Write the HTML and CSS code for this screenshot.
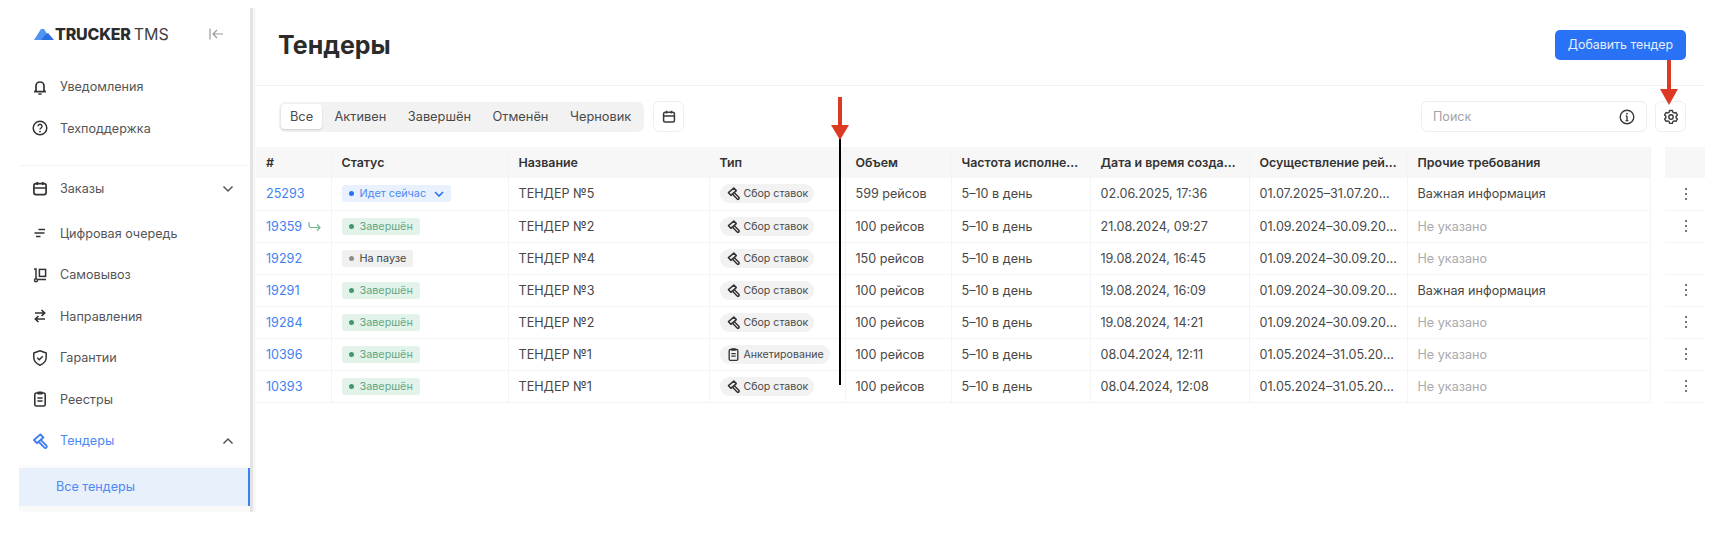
FILE: index.html
```html
<!DOCTYPE html>
<html lang="ru">
<head>
    <meta charset="UTF-8">
    <title>Тендеры</title>
    <link rel="stylesheet" href="styles.css">
</head>
<body>
    <svg class="icon-defs" width="0" height="0">
        <defs>
            <symbol id="i-gavel" viewBox="0 0 18 18">
                <path d="M9.4 2.4L3 8l2.9 3.2 6.4-5.7z" fill="none" stroke="currentColor" stroke-width="1.9" stroke-linejoin="round"/>
                <path d="M10 8.2l5.4 5.4a1.4 1.4 0 0 1-2 2L7.9 10" fill="none" stroke="currentColor" stroke-width="1.8" stroke-linejoin="round"/>
            </symbol>
            <symbol id="i-clip" viewBox="0 0 18 18">
                <rect x="3.8" y="3" width="10.4" height="13" rx="1.6" fill="none" stroke="currentColor" stroke-width="1.6"/>
                <rect x="6.2" y="1.6" width="5.6" height="3" rx="1" fill="currentColor"/>
                <path d="M6.4 8h5.2M6.4 11h5.2" stroke="currentColor" stroke-width="1.4"/>
            </symbol>
            <symbol id="i-cal" viewBox="0 0 18 18">
                <rect x="2.9" y="3.6" width="12.2" height="11" rx="2" fill="none" stroke="currentColor" stroke-width="1.7"/>
                <path d="M2.9 8h12.2M6.2 2v3M11.8 2v3" stroke="currentColor" stroke-width="1.7"/>
            </symbol>
            <symbol id="i-dots" viewBox="0 0 4 14">
                <circle cx="2" cy="2" r="1" fill="currentColor"/>
                <circle cx="2" cy="7" r="1" fill="currentColor"/>
                <circle cx="2" cy="12" r="1" fill="currentColor"/>
            </symbol>
        </defs>
    </svg>

    <div class="app">
        <aside class="sidebar">
            <div class="logo-row">
                <div class="logo">
                    <svg class="logo-mark" width="20" height="11" viewBox="0 0 20 11">
                        <path d="M0 11L7 0h3l3.5 5.5L9 11z" fill="#4f94f5"/>
                        <path d="M7 11l5-6 2-1 6 7z" fill="#2a6fe0"/>
                    </svg>
                    <span class="logo-bold">TRUCKER</span><span class="logo-light">TMS</span>
                </div>
                <svg class="collapse" width="16" height="14" viewBox="0 0 16 14">
                    <path d="M2 1.5v11M15 7H5M9 3L5 7l4 4" fill="none" stroke="#9a9a9a" stroke-width="1.2"/>
                </svg>
            </div>

            <a class="nav-item">
                <svg class="nav-icon" viewBox="0 0 18 18"><path d="M5 12.4V8a4 4 0 0 1 8 0v4.4l1.2 1.3H3.8zM7.4 16h3.2" fill="none" stroke="currentColor" stroke-width="1.7" stroke-linejoin="round"/></svg>
                Уведомления
            </a>
            <a class="nav-item">
                <svg class="nav-icon" viewBox="0 0 18 18"><circle cx="9" cy="9" r="6.8" fill="none" stroke="currentColor" stroke-width="1.5"/><path d="M7 7.2a2 2 0 1 1 3 1.8c-.7.4-1 .8-1 1.5" fill="none" stroke="currentColor" stroke-width="1.4"/><circle cx="9" cy="12.6" r=".9" fill="currentColor"/></svg>
                Техподдержка
            </a>

            <nav class="nav-panel">
                <a class="nav-item nav-orders">
                    <svg class="nav-icon"><use href="#i-cal"/></svg>
                    Заказы
                    <svg class="chevron" width="12" height="8" viewBox="0 0 12 8"><path d="M1.5 1.5L6 6l4.5-4.5" fill="none" stroke="currentColor" stroke-width="1.5"/></svg>
                </a>
                <a class="nav-item">
                    <svg class="nav-icon" viewBox="0 0 18 18"><path d="M7.5 5.5h6.5M3.5 9h10M5 12.5h4.5" fill="none" stroke="currentColor" stroke-width="1.6"/></svg>
                    Цифровая очередь
                </a>
                <a class="nav-item">
                    <svg class="nav-icon" viewBox="0 0 18 18"><path d="M3 3h2v10M7 13.5h8" fill="none" stroke="currentColor" stroke-width="1.5"/><circle cx="5" cy="14.3" r="1.5" fill="none" stroke="currentColor" stroke-width="1.4"/><rect x="8.4" y="3.4" width="6.2" height="7" fill="none" stroke="currentColor" stroke-width="1.5"/></svg>
                    Самовывоз
                </a>
                <a class="nav-item">
                    <svg class="nav-icon" viewBox="0 0 18 18"><path d="M4 6h9.5M10.6 3L13.6 6l-3 3M14 12H4.5M7.4 9l-3 3 3 3" fill="none" stroke="currentColor" stroke-width="1.7"/></svg>
                    Направления
                </a>
                <a class="nav-item">
                    <svg class="nav-icon" viewBox="0 0 18 18"><path d="M9 1.8l6.2 2.2v4.6c0 3.7-2.6 6.2-6.2 7.6-3.6-1.4-6.2-3.9-6.2-7.6V4z" fill="none" stroke="currentColor" stroke-width="1.5" stroke-linejoin="round"/><path d="M6.2 8.8l2 2 3.6-3.6" fill="none" stroke="currentColor" stroke-width="1.5"/></svg>
                    Гарантии
                </a>
                <a class="nav-item">
                    <svg class="nav-icon"><use href="#i-clip"/></svg>
                    Реестры
                </a>
                <a class="nav-item nav-active">
                    <svg class="nav-icon"><use href="#i-gavel"/></svg>
                    Тендеры
                    <svg class="chevron chevron-up" width="12" height="8" viewBox="0 0 12 8"><path d="M1.5 6.5L6 2l4.5 4.5" fill="none" stroke="currentColor" stroke-width="1.5"/></svg>
                </a>
                <a class="sub-item">Все тендеры</a>
            </nav>
        </aside>

        <main class="content">
            <header class="page-head">
                <h1>Тендеры</h1>
                <button class="btn-primary">Добавить тендер</button>
            </header>

            <div class="toolbar">
                <div class="tabs">
                    <span class="tab tab-active">Все</span>
                    <span class="tab">Активен</span>
                    <span class="tab">Завершён</span>
                    <span class="tab">Отменён</span>
                    <span class="tab">Черновик</span>
                </div>
                <button class="btn-icon btn-cal"><svg width="16" height="16"><use href="#i-cal"/></svg></button>
                <div class="search">
                    <span>Поиск</span>
                    <svg width="16" height="16" viewBox="0 0 16 16"><circle cx="8" cy="8" r="6.8" fill="none" stroke="currentColor" stroke-width="1.4"/><path d="M8 7v4.4M6.6 11.6h2.8M6.8 7h1.2" fill="none" stroke="currentColor" stroke-width="1.4"/><circle cx="8" cy="4.7" r=".9" fill="currentColor"/></svg>
                </div>
                <button class="btn-icon">
                    <svg width="16" height="16" viewBox="0 0 16 16"><path d="M6.6 1.5h2.8l.5 1.8 1.3.7 1.8-.5 1.4 2.4-1.3 1.3v1.5l1.3 1.3-1.4 2.4-1.8-.5-1.3.7-.5 1.8H6.6l-.5-1.8-1.3-.7-1.8.5-1.4-2.4 1.3-1.3V7.2L1.6 5.9 3 3.5l1.8.5 1.3-.7z" fill="none" stroke="currentColor" stroke-width="1.4" stroke-linejoin="round"/><circle cx="8" cy="8" r="2.2" fill="none" stroke="currentColor" stroke-width="1.4"/></svg>
                </button>
            </div>

            <table class="tenders">
                <colgroup>
                    <col class="c-id"><col class="c-status"><col class="c-name"><col class="c-type"><col class="c-vol"><col class="c-freq"><col class="c-date"><col class="c-run"><col class="c-other"><col class="c-gap"><col class="c-act">
                </colgroup>
                <thead>
                    <tr><th>#</th><th>Статус</th><th>Название</th><th>Тип</th><th>Объем</th><th>Частота исполнения</th><th>Дата и время создания</th><th>Осуществление рейсов</th><th>Прочие требования</th><th class="gap"></th><th></th></tr>
                </thead>
                <tbody>
                    <tr>
                        <td><a class="num">25293</a></td>
                        <td><span class="badge b-blue"><i></i>Идет сейчас<svg width="10" height="6" viewBox="0 0 10 6"><path d="M1 1l4 4 4-4" fill="none" stroke="currentColor" stroke-width="1.6"/></svg></span></td>
                        <td>ТЕНДЕР №5</td>
                        <td><span class="chip"><svg width="15" height="15"><use href="#i-gavel"/></svg>Сбор ставок</span></td>
                        <td>599 рейсов</td><td>5–10 в день</td><td>02.06.2025, 17:36</td><td class="run-narrow">01.07.2025–31.07.2025</td><td>Важная информация</td><td class="gap"></td>
                        <td class="act"><svg width="4" height="14"><use href="#i-dots"/></svg></td>
                    </tr>
                    <tr>
                        <td><a class="num">19359</a><svg class="repeat" width="13" height="10" viewBox="0 0 13 10"><path d="M1 1v3.5a2 2 0 0 0 2 2h9M9 3.5l3 3-3 3" fill="none" stroke="currentColor" stroke-width="1.2"/></svg></td>
                        <td><span class="badge b-green"><i></i>Завершён</span></td>
                        <td>ТЕНДЕР №2</td>
                        <td><span class="chip"><svg width="15" height="15"><use href="#i-gavel"/></svg>Сбор ставок</span></td>
                        <td>100 рейсов</td><td>5–10 в день</td><td>21.08.2024, 09:27</td><td>01.09.2024–30.09.2024</td><td class="muted">Не указано</td><td class="gap"></td>
                        <td class="act"><svg width="4" height="14"><use href="#i-dots"/></svg></td>
                    </tr>
                    <tr>
                        <td><a class="num">19292</a></td>
                        <td><span class="badge b-grey"><i></i>На паузе</span></td>
                        <td>ТЕНДЕР №4</td>
                        <td><span class="chip"><svg width="15" height="15"><use href="#i-gavel"/></svg>Сбор ставок</span></td>
                        <td>150 рейсов</td><td>5–10 в день</td><td>19.08.2024, 16:45</td><td>01.09.2024–30.09.2024</td><td class="muted">Не указано</td><td class="gap"></td>
                        <td class="act"></td>
                    </tr>
                    <tr>
                        <td><a class="num">19291</a></td>
                        <td><span class="badge b-green"><i></i>Завершён</span></td>
                        <td>ТЕНДЕР №3</td>
                        <td><span class="chip"><svg width="15" height="15"><use href="#i-gavel"/></svg>Сбор ставок</span></td>
                        <td>100 рейсов</td><td>5–10 в день</td><td>19.08.2024, 16:09</td><td>01.09.2024–30.09.2024</td><td>Важная информация</td><td class="gap"></td>
                        <td class="act"><svg width="4" height="14"><use href="#i-dots"/></svg></td>
                    </tr>
                    <tr>
                        <td><a class="num">19284</a></td>
                        <td><span class="badge b-green"><i></i>Завершён</span></td>
                        <td>ТЕНДЕР №2</td>
                        <td><span class="chip"><svg width="15" height="15"><use href="#i-gavel"/></svg>Сбор ставок</span></td>
                        <td>100 рейсов</td><td>5–10 в день</td><td>19.08.2024, 14:21</td><td>01.09.2024–30.09.2024</td><td class="muted">Не указано</td><td class="gap"></td>
                        <td class="act"><svg width="4" height="14"><use href="#i-dots"/></svg></td>
                    </tr>
                    <tr>
                        <td><a class="num">10396</a></td>
                        <td><span class="badge b-green"><i></i>Завершён</span></td>
                        <td>ТЕНДЕР №1</td>
                        <td><span class="chip"><svg width="15" height="15"><use href="#i-clip"/></svg>Анкетирование</span></td>
                        <td>100 рейсов</td><td>5–10 в день</td><td>08.04.2024, 12:11</td><td>01.05.2024–31.05.2024</td><td class="muted">Не указано</td><td class="gap"></td>
                        <td class="act"><svg width="4" height="14"><use href="#i-dots"/></svg></td>
                    </tr>
                    <tr>
                        <td><a class="num">10393</a></td>
                        <td><span class="badge b-green"><i></i>Завершён</span></td>
                        <td>ТЕНДЕР №1</td>
                        <td><span class="chip"><svg width="15" height="15"><use href="#i-gavel"/></svg>Сбор ставок</span></td>
                        <td>100 рейсов</td><td>5–10 в день</td><td>08.04.2024, 12:08</td><td>01.05.2024–31.05.2024</td><td class="muted">Не указано</td><td class="gap"></td>
                        <td class="act"><svg width="4" height="14"><use href="#i-dots"/></svg></td>
                    </tr>
                </tbody>
            </table>
        </main>
    </div>

    <!-- пометки поверх скриншота -->
    <div class="mark-line"></div>
    <svg class="arrow arrow-col" width="18" height="44" viewBox="0 0 18 44"><path d="M7 0h4v28h7l-9 15-9-15h7z" fill="#dd3a24"/></svg>
    <svg class="arrow arrow-gear" width="18" height="45" viewBox="0 0 18 45"><path d="M7 0h4v29h7l-9 16-9-16h7z" fill="#dd3a24"/></svg>
</body>
</html>
```

FILE: styles.css
```css
* {
    box-sizing: border-box;
}
html, body {
    margin: 0;
    height: 100%;
}
body {
    position: relative;
    overflow: hidden;
    background: #fff;
    color: #474747;
    font-family: Inter, "Noto Sans", sans-serif;
    font-size: 12.6px;
}
.icon-defs {
    position: absolute;
}
.app {
    display: flex;
    height: 512px;
    padding-top: 8px;
}

/* sidebar */
.sidebar {
    width: 256px;
    flex: none;
    padding-right: 6px;
    background: linear-gradient(to right, #e2e2e2 0, #e6e6e6 3px, #f3f3f3 3px, #fbfbfb 6px) right top / 6px 100% no-repeat;
}
.logo-row {
    display: flex;
    align-items: center;
    justify-content: space-between;
    height: 52px;
    margin-bottom: 6px;
    padding: 0 26px 0 34px;
}
.logo {
    display: flex;
    align-items: center;
    font-size: 16px;
    color: #2b2b2b;
}
.logo-mark {
    margin-right: 1px;
}
.logo-bold {
    font-weight: 800;
    letter-spacing: -0.2px;
    margin-right: 3px;
}
.logo-light {
    font-weight: 400;
    color: #3f3f3f;
}
.nav-item {
    display: flex;
    align-items: center;
    gap: 11px;
    height: 41.5px;
    padding-left: 31px;
    color: #555;
}
.nav-icon {
    width: 18px;
    height: 18px;
    flex: none;
    color: #333;
}
.nav-panel {
    margin: 16px 0 0 19px;
    padding-top: 2px;
    border-top: 1px solid #f4f4f4;
}
.nav-panel .nav-item {
    padding-left: 12px;
}
.nav-orders {
    margin-bottom: 3px;
}
.chevron {
    margin-left: auto;
    margin-right: 16px;
    color: #555;
}
.nav-active {
    color: #4d88f5;
}
.nav-active .nav-icon {
    color: #3f7ff2;
}
.nav-active .chevron {
    color: #555;
}
.sub-item {
    display: flex;
    align-items: center;
    height: 38px;
    margin-top: 6px;
    padding-left: 37px;
    background: #e8f0fc;
    border-right: 2px solid #3f7ff2;
    box-shadow: 0 -3px 0 #fbfbfb, 0 6px 0 #fafafa;
    color: #4d88f5;
}

/* main */
.content {
    flex: 1;
    min-width: 0;
    padding-right: 23px;
}
.page-head {
    display: flex;
    align-items: center;
    justify-content: space-between;
    height: 78px;
    padding: 0 19px 4px 22px;
    border-bottom: 1px solid #f3f3f3;
}
h1 {
    margin: 0;
    font-size: 25px;
    font-weight: 700;
    color: #2b2b2b;
}
.btn-primary {
    width: 131px;
    height: 30px;
    border: none;
    border-radius: 5px;
    background: #2a72f5;
    color: #e6eefc;
    font: 12.4px Inter, sans-serif;
}
.toolbar {
    display: flex;
    align-items: center;
    height: 61px;
    padding: 0 19px 0 23px;
}
.tabs {
    display: flex;
    align-items: center;
    height: 30px;
    padding: 0 2px;
    border-radius: 6px;
    background: #f2f2f2;
}
.tab {
    padding: 0 10.8px;
    line-height: 25px;
    border-radius: 4px;
    font-size: 12.8px;
    color: #4a4a4a;
}
.tab-active {
    padding: 0 9px;
    margin-right: 1.5px;
    background: #fff;
    box-shadow: 0 1px 2px rgba(0, 0, 0, 0.15);
}
.btn-icon {
    display: flex;
    align-items: center;
    justify-content: center;
    width: 31px;
    height: 31px;
    padding: 0;
    border: 1px solid #eee;
    border-radius: 6px;
    background: #fff;
    color: #3a3a3a;
}
.btn-cal {
    margin-left: 9px;
    margin-right: auto;
}
.search {
    display: flex;
    align-items: center;
    justify-content: space-between;
    width: 226px;
    height: 31px;
    margin-right: 8px;
    padding: 0 11px;
    border: 1px solid #eee;
    border-radius: 6px;
    color: #a3a3a3;
}
.search svg {
    color: #3a3a3a;
}

/* table */
.tenders {
    width: 1449px;
    table-layout: fixed;
    border-collapse: collapse;
}
.c-id { width: 75px; }
.c-status { width: 177px; }
.c-name { width: 201px; }
.c-type { width: 136px; }
.c-vol { width: 106px; }
.c-freq { width: 139px; }
.c-date { width: 159px; }
.c-run { width: 158px; }
.c-other { width: 243px; }
.c-gap { width: 15px; }
.c-act { width: 40px; }
th, td {
    height: 32px;
    padding: 0 9px 0 10px;
    overflow: hidden;
    white-space: nowrap;
    text-overflow: ellipsis;
    text-align: left;
    border-right: 1px solid #f4f4f4;
    border-bottom: 1px solid #f4f4f4;
}
td:first-child, td:nth-child(4) {
    padding-right: 0;
}
td.run-narrow {
    padding-right: 14px;
}
th {
    height: 31px;
    background: #f7f7f7;
    border-bottom: none;
    font-size: 12.4px;
    font-weight: 600;
    color: #333;
}
.tenders .gap {
    padding: 0;
    background: #fff;
    border: none;
}
th:last-child, td:last-child {
    border-right: none;
}
td.act {
    padding: 0 0 0 2px;
    text-align: center;
    color: #4a4a4a;
}
td.act svg {
    display: block;
    margin: 0 auto;
}
.num {
    color: #3f7ff2;
}
.repeat {
    margin-left: 6px;
    color: #6fb98f;
}
.muted {
    color: #aaa;
}
.badge {
    display: inline-flex;
    align-items: center;
    gap: 6px;
    height: 17px;
    padding: 0 7px;
    border-radius: 3px;
    font-size: 10.8px;
    vertical-align: middle;
}
.badge i {
    width: 5px;
    height: 5px;
    border-radius: 50%;
    background: currentColor;
}
.b-blue {
    background: #e8f1fd;
    color: #4d88f5;
}
.b-blue i, .b-blue svg {
    color: #2a72f5;
}
.b-blue svg {
    margin-left: 2px;
}
.b-green {
    background: #e4f3ea;
    color: #63a884;
}
.b-green i {
    background: #3f9a68;
}
.b-grey {
    background: #f0f0f0;
    color: #444;
}
.b-grey i {
    background: #8e8e8e;
}
.chip {
    display: inline-flex;
    align-items: center;
    gap: 3px;
    height: 19px;
    padding: 0 6px;
    border-radius: 10px;
    background: #f2f2f2;
    font-size: 10.6px;
    color: #4a4a4a;
    vertical-align: middle;
}
.chip svg {
    color: #333;
}

/* annotations */
.mark-line {
    position: absolute;
    left: 839px;
    top: 136px;
    width: 2px;
    height: 249px;
    background: #000;
}
.arrow {
    position: absolute;
}
.arrow-col {
    left: 831px;
    top: 97px;
}
.arrow-gear {
    left: 1660px;
    top: 60px;
}
```
